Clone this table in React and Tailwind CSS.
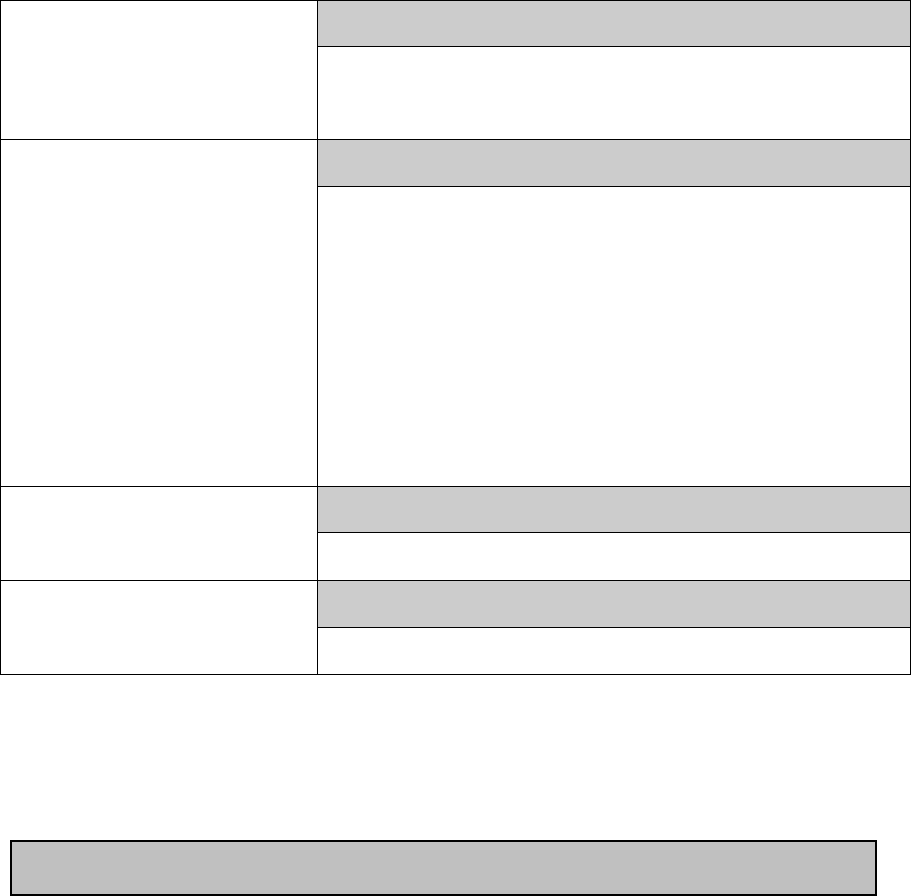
import React from 'react';

// body heights include their 1px top rule (border-box)
const ROWS = [
  { head: 'h-[45px]', body: 'h-[93px]' },
  { head: 'h-[46px]', body: 'h-[300px]' },
  { head: 'h-[45px]', body: 'h-[48px]' },
  { head: 'h-[46px]', body: 'h-[47px]' },
];

function Row({ head, body, first }) {
  return (
    <div className={['flex', first ? '' : 'border-t border-black'].join(' ')}>
      {/* label column */}
      <div className="w-[317px] shrink-0 border-r border-black bg-white" />
      {/* value column: grey header over white body */}
      <div className="flex-1 flex flex-col">
        <div className={`${head} bg-[#cccccc]`} />
        <div className={`${body} border-t border-black bg-white`} />
      </div>
    </div>
  );
}

export default function App() {
  return (
    <div className="w-[912px] h-[896px] bg-white font-['Liberation_Sans',Arial,sans-serif]">
      <div className="w-[911px] border border-black">
        {ROWS.map((r, i) => (
          <Row key={i} head={r.head} body={r.body} first={i === 0} />
        ))}
      </div>
      <div className="ml-[10px] mt-[165px] w-[867px] h-[56px] border-2 border-black bg-[#c0c0c0]" />
    </div>
  );
}
